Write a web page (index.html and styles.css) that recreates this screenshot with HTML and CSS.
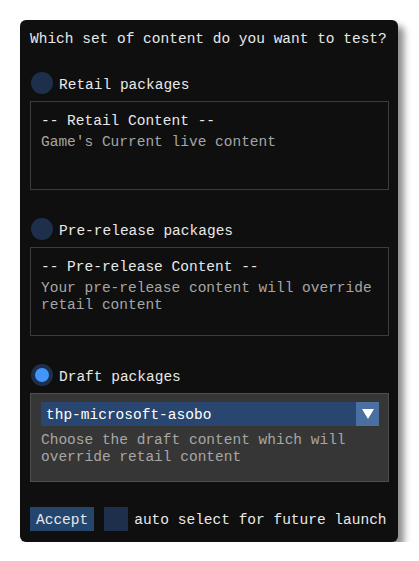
FILE: index.html
```html
<!DOCTYPE html>
<html lang="en">
<head>
    <meta charset="UTF-8">
    <meta name="viewport" content="width=device-width, initial-scale=1.0">
    <title>Content Selection</title>
    <link rel="stylesheet" href="styles.css">
</head>
<body>
    <div class="window">
        <p class="title">Which set of content do you want to test?</p>

        <div class="option">
            <div class="radio-row"><span class="radio"></span><span class="radio-label">Retail packages</span></div>
            <div class="panel">
                <div class="panel-head">-- Retail Content --</div>
                <div class="panel-desc">Game's Current live content</div>
            </div>
        </div>

        <div class="option">
            <div class="radio-row"><span class="radio"></span><span class="radio-label">Pre-release packages</span></div>
            <div class="panel">
                <div class="panel-head">-- Pre-release Content --</div>
                <div class="panel-desc">Your pre-release content will override retail content</div>
            </div>
        </div>

        <div class="option">
            <div class="radio-row"><span class="radio checked"></span><span class="radio-label">Draft packages</span></div>
            <div class="panel active">
                <div class="combo">
                    <span class="combo-value">thp-microsoft-asobo</span>
                    <span class="combo-arrow"></span>
                </div>
                <div class="panel-desc">Choose the draft content which will override retail content</div>
            </div>
        </div>

        <div class="footer">
            <button class="accept">Accept</button>
            <span class="checkbox"></span>
            <span class="check-label">auto select for future launch</span>
        </div>
    </div>
</body>
</html>
```

FILE: styles.css
```css
body {
    margin: 0;
    padding: 0;
    background-color: #FFFFFF;
    font-family: "Liberation Mono", "DejaVu Sans Mono", monospace;
    font-size: 14.5px;
    color: #e8e8e8;
}
.window {
    width: 378px;
    margin: 20px 0 0 20px;
    padding: 11px 9px 11px 10px;
    box-sizing: border-box;
    background-color: #0f0f0f;
    border-radius: 6px;
    box-shadow: 6px 6px 7px rgba(0, 0, 0, 0.45);
}
.title {
    margin: 0;
    line-height: 17px;
}
.option {
    margin-top: 24px;
}
.option + .option {
    margin-top: 28px;
}
.radio-row {
    display: flex;
    align-items: center;
    gap: 6px;
    height: 22px;
    line-height: 22px;
    margin-left: 1px;
}
.radio-label {
    padding-top: 3px;
}
.radio {
    width: 22px;
    height: 22px;
    border-radius: 50%;
    background-color: #1d2f4b;
    display: flex;
    align-items: center;
    justify-content: center;
}
.radio.checked::after {
    content: "";
    width: 14px;
    height: 14px;
    border-radius: 50%;
    background-color: #4296fa;
}
.panel {
    margin-top: 7px;
    height: 89px;
    box-sizing: border-box;
    padding: 11px 10px 9px;
    border: 1px solid #3c3c3f;
}
.panel.active {
    background-color: #363636;
    border-color: #4e4e50;
    padding-top: 8px;
}
.panel-head {
    line-height: 17px;
}
.panel-desc {
    margin-top: 4px;
    line-height: 16.5px;
    color: #a6a6a6;
}
.combo {
    display: flex;
    height: 24px;
    background-color: #294670;
    margin-right: -1px;
}
.combo-value {
    flex: 1;
    padding: 1px 0 0 5px;
    line-height: 24px;
    color: #ffffff;
}
.combo-arrow {
    width: 23px;
    background-color: #4a6fa0;
    display: flex;
    align-items: center;
    justify-content: center;
}
.combo-arrow::after {
    content: "";
    border-left: 6px solid transparent;
    border-right: 6px solid transparent;
    border-top: 10px solid #ffffff;
}
.active .panel-desc {
    margin-top: 6px;
}
.footer {
    margin-top: 25px;
    display: flex;
    align-items: center;
    height: 24px;
}
.accept {
    border: none;
    height: 24px;
    padding: 1px 6px 0;
    margin: 0;
    font-family: inherit;
    font-size: inherit;
    color: #e8e8e8;
    background-color: #24456e;
    cursor: pointer;
}
.checkbox {
    width: 24px;
    height: 24px;
    margin-left: 10px;
    background-color: #1d2f4b;
}
.check-label {
    margin-left: 6px;
    padding-top: 2px;
}
```
